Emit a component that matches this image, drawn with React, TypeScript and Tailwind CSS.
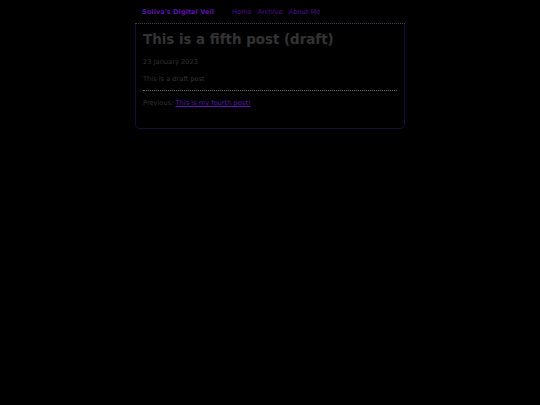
export default function App() {
  return (
    <div
      className="min-h-[405px] w-full bg-black text-[#333333] text-[6.67px]"
      style={{ fontFamily: '"DejaVu Sans", Verdana, sans-serif' }}
    >
      <div className="mx-auto w-[270px]">
        <header className="flex items-center border-b border-dotted border-[#4a4058] pl-[7px] pt-[8px] pb-[7px] leading-[8px]">
          <a className="font-bold text-[#5a12a6]" href="#">Soliva's Digital Veil</a>
          <nav className="ml-[18px] flex gap-[6px] text-[#4e0e92]">
            <a href="#">Home</a>
            <a href="#">Archive</a>
            <a href="#">About Me</a>
          </nav>
        </header>
        <article className="rounded-b-[5px] border border-t-0 border-[#1c0a38] px-[7px] pt-[8px] pb-[21px]">
          <h1 className="text-[13.4px] font-bold leading-[16px] text-[#333333]">This is a fifth post (draft)</h1>
          <p className="mt-[10px] leading-[8px]">23 January 2023</p>
          <p className="mt-[9px] leading-[8px]">This is a draft post</p>
          <hr className="mt-[7px] border-0 border-t border-dotted border-[#6a6a6a]" />
          <p className="mt-[8px] leading-[8px]">
            Previous: <a href="#" className="text-[#5a1aae] underline">This is my fourth post!</a>
          </p>
        </article>
      </div>
    </div>
  );
}
